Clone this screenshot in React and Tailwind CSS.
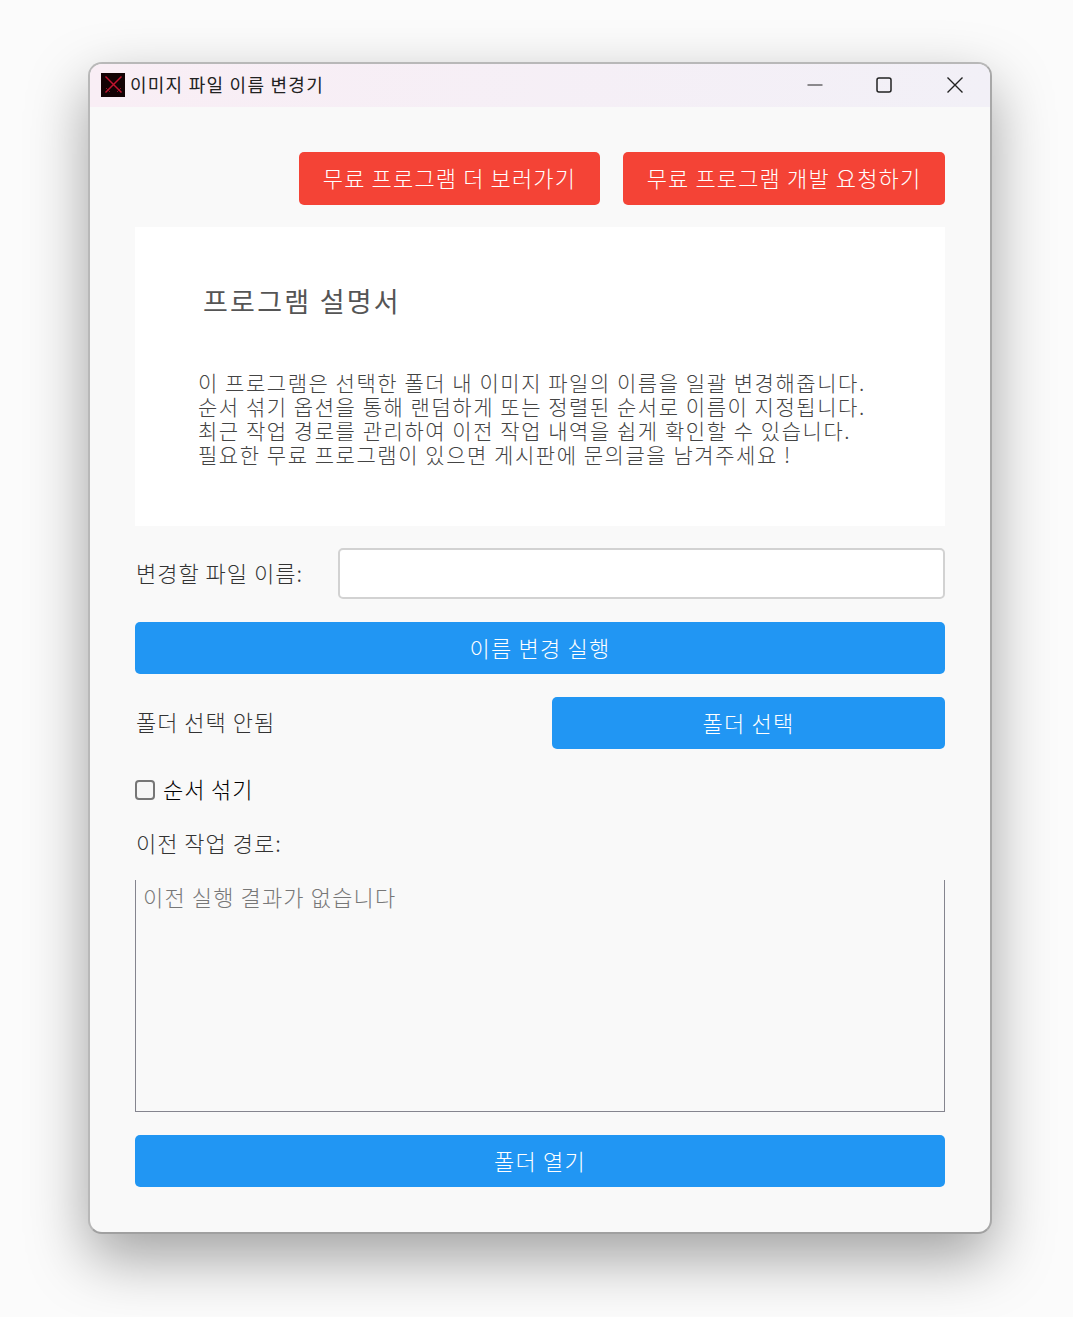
const font = "font-['Noto_Sans_CJK_KR','Noto_Sans',sans-serif]";

function Logo() {
  return (
    <svg width="24" height="24" viewBox="0 0 24 24" className="shrink-0">
      <rect width="24" height="24" fill="#120204" />
      <path d="M4.5 3.5 L20.5 19.5 M20.5 3.5 L4.5 19.5" stroke="#c0142f" strokeWidth="1.5" />
      <path d="M5 15 L9 19 M20 15 L16 19" stroke="#8f1026" strokeWidth="1" />
    </svg>
  );
}

function TitleBar() {
  return (
    <div className="flex items-center h-[43px] bg-gradient-to-r from-[#f9eef5] to-[#f2f0f7] pl-[11px] pb-[2px]">
      <Logo />
      <span className="ml-[5px] mb-[1px] text-[18px] leading-[22px] text-[#222] tracking-[1.25px]">이미지 파일 이름 변경기</span>
      <div className="ml-auto flex items-center">
        <svg width="16" height="16" viewBox="0 0 16 16" className="mr-[53px]">
          <path d="M0.5 8 H15.5" stroke="#222" strokeWidth="1" />
        </svg>
        <svg width="16" height="16" viewBox="0 0 16 16" className="mr-[54px]">
          <rect x="1" y="1" width="14" height="14" rx="2" fill="none" stroke="#222" strokeWidth="1.5" />
        </svg>
        <svg width="18" height="18" viewBox="0 0 18 18" className="mr-[26px]">
          <path d="M1.5 1.5 L16.5 16.5 M16.5 1.5 L1.5 16.5" stroke="#222" strokeWidth="1.4" />
        </svg>
      </div>
    </div>
  );
}

function BlueButton({ children, className = "" }) {
  return (
    <button className={"h-[52px] pb-[2px] rounded-[5px] bg-[#2196f3] text-white text-[22px] font-light tracking-[1.2px] " + className}>
      {children}
    </button>
  );
}

export default function App() {
  return (
    <main className={"min-h-[1317px] bg-[#fbfbfb] pt-[62px] pl-[88px] " + font}>
      <div className="w-[904px] h-[1172px] rounded-[14px] border-2 border-[#b8b8b8] border-r-[#a8a8a8] border-b-[#a0a0a0] bg-[#f9f9f9] overflow-hidden shadow-[0_24px_60px_rgba(0,0,0,0.36)]">
        <TitleBar />
        <div className="flex flex-col px-[45px] pt-[45px]">
          <div className="flex justify-end gap-[23px]">
            <button className="h-[53px] w-[301px] pb-[2px] rounded-[5px] bg-[#f44336] text-white text-[22px] font-light tracking-[1.15px]">무료 프로그램 더 보러가기</button>
            <button className="h-[53px] w-[322px] pb-[2px] rounded-[5px] bg-[#f44336] text-white text-[22px] font-light tracking-[1.15px]">무료 프로그램 개발 요청하기</button>
          </div>

          <div className="mt-[22px] h-[299px] bg-white pl-[63px] pt-[54px] text-[#444]">
            <h1 className="ml-[5px] text-[27px] leading-[40px] font-normal text-[#555] tracking-[2.25px]">프로그램 설명서</h1>
            <p className="mt-[49px] text-[21px] leading-[24px] font-light tracking-[1.55px] whitespace-nowrap">
              이 프로그램은 선택한 폴더 내 이미지 파일의 이름을 일괄 변경해줍니다.<br />
              순서 섞기 옵션을 통해 랜덤하게 또는 정렬된 순서로 이름이 지정됩니다.<br />
              최근 작업 경로를 관리하여 이전 작업 내역을 쉽게 확인할 수 있습니다.<br />
              필요한 무료 프로그램이 있으면 게시판에 문의글을 남겨주세요 !
            </p>
          </div>

          <div className="mt-[22px] flex items-center h-[51px]">
            <label className="w-[203px] pl-px pb-[3px] text-[22px] font-light tracking-[1px] text-[#333]">변경할 파일 이름:</label>
            <input className="flex-1 h-[51px] rounded-[5px] border-2 border-[#d2d2d2] bg-white" />
          </div>

          <BlueButton className="mt-[23px] w-full">이름 변경 실행</BlueButton>

          <div className="mt-[23px] flex items-center justify-between">
            <span className="pl-px pb-[3px] text-[22px] font-light tracking-[1px] text-[#333]">폴더 선택 안됨</span>
            <BlueButton className="w-[393px]">폴더 선택</BlueButton>
          </div>

          <label className="mt-[29px] flex items-center h-[24px] text-[22px] text-[#000]">
            <span className="w-[20px] h-[20px] rounded-[4px] border-2 border-[#767676] bg-[#f6f6f6]" />
            <span className="ml-[8px] pb-[4px] font-light tracking-[0.9px]">순서 섞기</span>
          </label>

          <div className="mt-[24px] h-[32px] pl-px text-[22px] leading-[32px] font-light tracking-[1px] text-[#333]">이전 작업 경로:</div>

          <div className="mt-[22px] h-[232px] border border-t-0 border-[#85858f] px-[7px] pt-[1px] text-[22px] leading-[30px] font-light tracking-[1.15px] text-[#777]">
            이전 실행 결과가 없습니다
          </div>

          <BlueButton className="mt-[23px] w-full">폴더 열기</BlueButton>
        </div>
      </div>
    </main>
  );
}
